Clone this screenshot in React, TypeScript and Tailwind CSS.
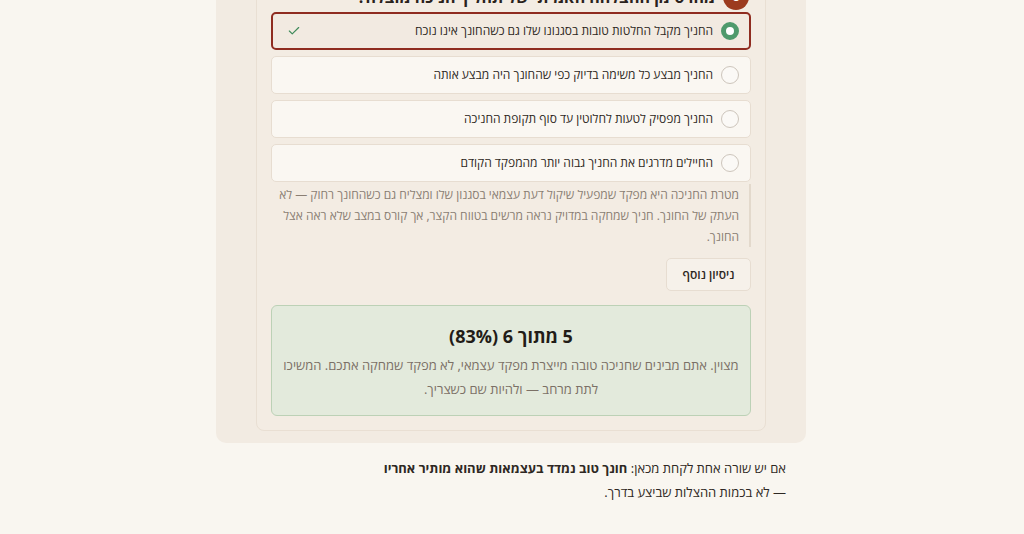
import { Check } from "lucide-react"

type Option = {
  text: string
  selected?: boolean
}

const options: Option[] = [
  { text: "החניך מקבל החלטות טובות בסגנונו שלו גם כשהחונך אינו נוכח", selected: true },
  { text: "החניך מבצע כל משימה בדיוק כפי שהחונך היה מבצע אותה" },
  { text: "החניך מפסיק לטעות לחלוטין עד סוף תקופת החניכה" },
  { text: "החיילים מדרגים את החניך גבוה יותר מהמפקד הקודם" },
]

function Radio({ selected }: { selected?: boolean }) {
  if (selected) {
    return <span className="h-[18px] w-[18px] shrink-0 rounded-full border-[5.5px] border-[#4f9a6c] bg-white" />
  }
  return <span className="h-[18px] w-[18px] shrink-0 rounded-full border-[1.5px] border-[#cdc5bc] bg-[#fbf9f6]" />
}

function OptionRow({ option }: { option: Option }) {
  return (
    <div
      className={
        option.selected
          ? "flex h-[38px] items-center gap-2 rounded-[5px] border-2 border-[#8f2c20] bg-[#f2eae1] pl-[14px] pr-[10px]"
          : "flex h-[38px] items-center gap-2 rounded-[5px] border border-[#e7ddd1] bg-[#faf7f2] pl-[15px] pr-[11px]"
      }
    >
      <Radio selected={option.selected} />
      <span className="flex-1 text-[12px] text-[#2e2823]">{option.text}</span>
      {option.selected && <Check size={14} strokeWidth={2} className="text-[#3f8a5a]" />}
    </div>
  )
}

export default function App() {
  return (
    <div
      dir="rtl"
      className="min-h-screen overflow-hidden bg-[#f9f6f0] text-[#2e2823]"
      style={{ fontFamily: '"Open Sans", "Liberation Sans", sans-serif' }}
    >
      <div className="mx-auto w-[590px] -translate-x-[1px]">
        <div className="-mt-[71px] rounded-[10px] bg-[#f2ebe2] px-10 pb-3 pt-10">
          <div className="rounded-[8px] border border-[#e9dfd3] bg-[#f3ece3] p-[14px]">
            <div className="mb-[2px] flex h-[26px] items-center gap-[8px] pr-[2px]">
              <span className="flex h-[26px] w-[26px] shrink-0 items-center justify-center rounded-full bg-[#9c3b1f] text-[13px] font-bold text-white">
                6
              </span>
              <h3 className="text-[16px] font-bold text-[#2a221c]">מהו סימן ההצלחה האמיתי של תהליך חניכה מוצלח?</h3>
            </div>

            <div className="flex flex-col gap-[6px]">
              {options.map((o) => (
                <OptionRow key={o.text} option={o} />
              ))}
            </div>

            <p className="mt-[2px] border-r-2 border-[#e3d9cc] pl-[4px] pr-[10px] text-[12px] leading-[21px] text-[#8a7e73]">
              מטרת החניכה היא מפקד שמפעיל שיקול דעת עצמאי בסגנון שלו ומצליח גם כשהחונך רחוק — לא העתק של החונך. חניך
              שמחקה במדויק נראה מרשים בטווח הקצר, אך קורס במצב שלא ראה אצל החונך.
            </p>

            <div className="mt-[11px] flex">
              <button className="h-[33px] w-[85px] rounded-[5px] border border-[#e7ddd1] bg-[#f6f1ea] text-[12px] font-semibold text-[#2e2823]">
                ניסיון נוסף
              </button>
            </div>

            <div className="mt-[14px] rounded-[6px] border border-[#bcd1b6] bg-[#e3eadc] px-[9px] pb-[14px] pt-[16px] text-center">
              <div className="text-[18px] font-bold leading-[28px] text-[#221c17]">5 מתוך 6 (83%)</div>
              <p className="mt-[3px] text-[13px] leading-[24px] text-[#7b7066]">
                מצוין. אתם מבינים שחניכה טובה מייצרת מפקד עצמאי, לא מפקד שמחקה אתכם. המשיכו לתת מרחב — ולהיות שם כשצריך.
              </p>
            </div>
          </div>
        </div>

        <p className="mt-[13px] w-[432px] pr-[20px] text-[13px] leading-[24px] text-[#2e2823]">
          אם יש שורה אחת לקחת מכאן: <strong className="font-bold">חונך טוב נמדד בעצמאות שהוא מותיר אחריו</strong> — לא
          בכמות ההצלות שביצע בדרך.
        </p>
      </div>
    </div>
  )
}
